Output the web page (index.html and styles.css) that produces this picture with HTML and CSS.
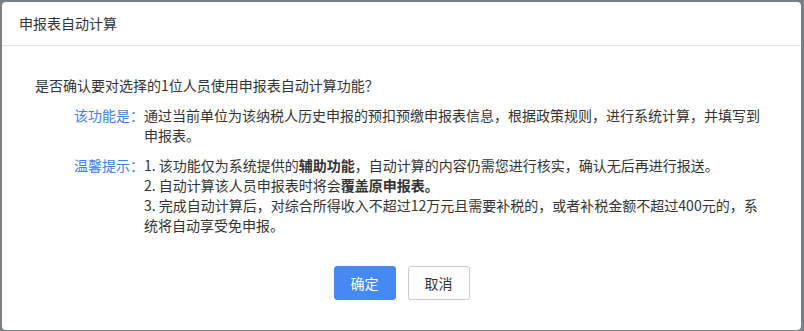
FILE: index.html
```html
<!DOCTYPE html>
<html lang="zh-CN">
    <head>
        <meta charset="UTF-8" />
        <meta name="viewport" content="width=device-width, initial-scale=1.0" />
        <title>申报表自动计算</title>
        <link rel="stylesheet" href="styles.css">
    </head>
    <body>
        <div class="modal">
            <div class="modal-header">申报表自动计算</div>
            <div class="modal-body">
                <p class="question">是否确认要对选择的1位人员使用申报表自动计算功能？</p>
                <div class="info">
                    <div class="info-label">该功能是：</div>
                    <div class="info-text">通过当前单位为该纳税人历史申报的预扣预缴申报表信息，根据政策规则，进行系统计算，并填写到申报表。</div>
                </div>
                <div class="info">
                    <div class="info-label">温馨提示：</div>
                    <div class="info-text">
                        <p>1. 该功能仅为系统提供的<b>辅助功能</b>，自动计算的内容仍需您进行核实，确认无后再进行报送。</p>
                        <p>2. 自动计算该人员申报表时将会<b>覆盖原申报表。</b></p>
                        <p>3. 完成自动计算后，对综合所得收入不超过12万元且需要补税的，或者补税金额不超过400元的，系统将自动享受免申报。</p>
                    </div>
                </div>
            </div>
            <div class="modal-footer">
                <button class="btn btn-primary">确定</button>
                <button class="btn">取消</button>
            </div>
        </div>
    </body>
</html>
```

FILE: styles.css
```css
html,
body {
    margin: 0;
    height: 100%;
    background-color: #7a7e85;
    font-family: "Noto Sans CJK SC", "Noto Sans", sans-serif;
    color: #333;
}
.modal {
    margin: 2px 3px 0 2px;
    height: 328px;
    background: #fff;
    border-radius: 4px;
    display: flex;
    flex-direction: column;
}
.modal-header {
    height: 43px;
    line-height: 43px;
    padding-left: 17px;
    font-size: 14px;
    border-bottom: 1px solid #e5e5e5;
}
.modal-body {
    padding: 29px 37px 0 33px;
    font-size: 14px;
    line-height: 20px;
}
.modal-body p {
    margin: 0;
}
.question {
    margin-bottom: 10px !important;
}
.info {
    display: flex;
    padding-left: 39px;
    margin-bottom: 10px;
}
.info-label {
    width: 70px;
    flex-shrink: 0;
    color: #4080e8;
}
.info-text {
    width: 620px;
}
.info-text b {
    font-weight: bold;
}
.modal-footer {
    margin-top: 21px;
    display: flex;
    justify-content: center;
    gap: 12px;
}
.btn {
    width: 62px;
    height: 34px;
    border: 1px solid #ccc;
    border-radius: 3px;
    background: #fff;
    color: #333;
    font-family: inherit;
    font-size: 14px;
    padding: 0;
}
.btn-primary {
    background: #4689f2;
    border-color: #4689f2;
    color: #fff;
}
```
